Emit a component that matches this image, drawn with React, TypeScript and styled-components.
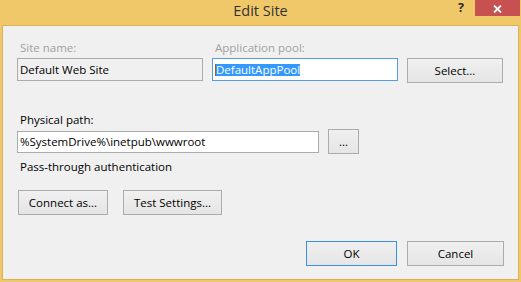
import React from "react";
import styled, { createGlobalStyle } from "styled-components";

const Global = createGlobalStyle`
  html, body {
    margin: 0;
    padding: 0;
    background: #f0c86a;
  }
  * {
    box-sizing: border-box;
  }
`;

const Window = styled.div`
  width: 521px;
  height: 282px;
  background: #f0c86a;
  display: flex;
  flex-direction: column;
  font-family: "Open Sans", "Liberation Sans", sans-serif;
  font-size: 11.5px;
  color: #000;
`;

const TitleBar = styled.div`
  position: relative;
  height: 25px;
  flex: none;
  display: flex;
  align-items: center;
  justify-content: center;
`;

const Title = styled.div`
  font-size: 14.5px;
  color: #333;
  margin-top: -4px;
`;

const HelpGlyph = styled.div`
  position: absolute;
  left: 458px;
  top: 0;
  font-size: 12.5px;
  line-height: 15px;
  font-weight: 700;
  color: #2b2b2b;
`;

const CloseButton = styled.div`
  position: absolute;
  right: 1px;
  top: 0;
  width: 45px;
  height: 16px;
  background: #c75050;
  display: flex;
  align-items: center;
  justify-content: center;
  padding-top: 1px;
`;

const Client = styled.div`
  flex: 1;
  margin: 0 2px 2px 2px;
  border: 1px solid #d6b25a;
  background: #f0f0f0;
  padding: 14px 0 0 14px;
  display: flex;
  flex-direction: column;
`;

const TopGrid = styled.div`
  display: grid;
  grid-template-columns: 186px 186px 96px;
  column-gap: 9px;
  row-gap: 2px;
  align-items: start;
`;

const Label = styled.div<{ $disabled?: boolean }>`
  padding-left: 3px;
  line-height: 16px;
  color: ${(p) => (p.$disabled ? "#a0a0a0" : "#000")};
`;

const TextBox = styled.div<{ $focused?: boolean; $readonly?: boolean; $width?: number; $height?: number }>`
  width: ${(p) => (p.$width ? `${p.$width}px` : "auto")};
  height: ${(p) => p.$height ?? 23}px;
  border: 1px solid ${(p) => (p.$focused ? "#569de5" : "#acacac")};
  background: ${(p) => (p.$readonly ? "#f0f0f0" : "#fff")};
  padding: 0 2px;
  display: flex;
  align-items: center;
  white-space: nowrap;
`;

const Selected = styled.span`
  background: #3399ff;
  color: #fff;
  line-height: 12px;
  height: 12px;
  display: inline-flex;
  align-items: center;
  border-left: 1px solid #a06020;
`;

const Button = styled.div<{ $width: number; $default?: boolean }>`
  width: ${(p) => p.$width}px;
  height: 25px;
  border: 1px solid ${(p) => (p.$default ? "#3c8ee6" : "#acacac")};
  background: linear-gradient(#f0f0f0, #e5e5e5);
  display: flex;
  align-items: center;
  justify-content: center;
  white-space: nowrap;
`;

const PathSection = styled.div`
  margin-top: 29px;
  display: flex;
  flex-direction: column;
  gap: 1px;
`;

const PathRow = styled.div`
  display: flex;
  align-items: center;
  gap: 9px;
`;

const Note = styled.div`
  margin-top: 5px;
  padding-left: 3px;
  line-height: 16px;
`;

const ActionRow = styled.div`
  margin-top: 15px;
  padding-left: 1px;
  display: flex;
  gap: 15px;
`;

const FooterRow = styled.div`
  margin-top: 26px;
  padding-left: 289px;
  display: flex;
  gap: 10px;
`;

export default function App() {
  return (
    <Window>
      <Global />
      <TitleBar>
        <Title>Edit Site</Title>
        <HelpGlyph>?</HelpGlyph>
        <CloseButton>
          <svg width="9" height="8" viewBox="0 0 9 8">
            <path d="M1 0.5 L8 7.5 M8 0.5 L1 7.5" stroke="#fff" strokeWidth="1.8" />
          </svg>
        </CloseButton>
      </TitleBar>
      <Client>
        <TopGrid>
          <Label $disabled>Site name:</Label>
          <Label $disabled>Application pool:</Label>
          <div />
          <TextBox $readonly>Default Web Site</TextBox>
          <TextBox $focused>
            <Selected>DefaultAppPool</Selected>
          </TextBox>
          <Button $width={96}>Select...</Button>
        </TopGrid>
        <PathSection>
          <Label>Physical path:</Label>
          <PathRow>
            <TextBox $width={302} $height={22}>
              %SystemDrive%\inetpub\wwwroot
            </TextBox>
            <Button $width={31}>...</Button>
          </PathRow>
        </PathSection>
        <Note>Pass-through authentication</Note>
        <ActionRow>
          <Button $width={90}>Connect as...</Button>
          <Button $width={99}>Test Settings...</Button>
        </ActionRow>
        <FooterRow>
          <Button $width={91} $default>
            OK
          </Button>
          <Button $width={97}>Cancel</Button>
        </FooterRow>
      </Client>
    </Window>
  );
}
